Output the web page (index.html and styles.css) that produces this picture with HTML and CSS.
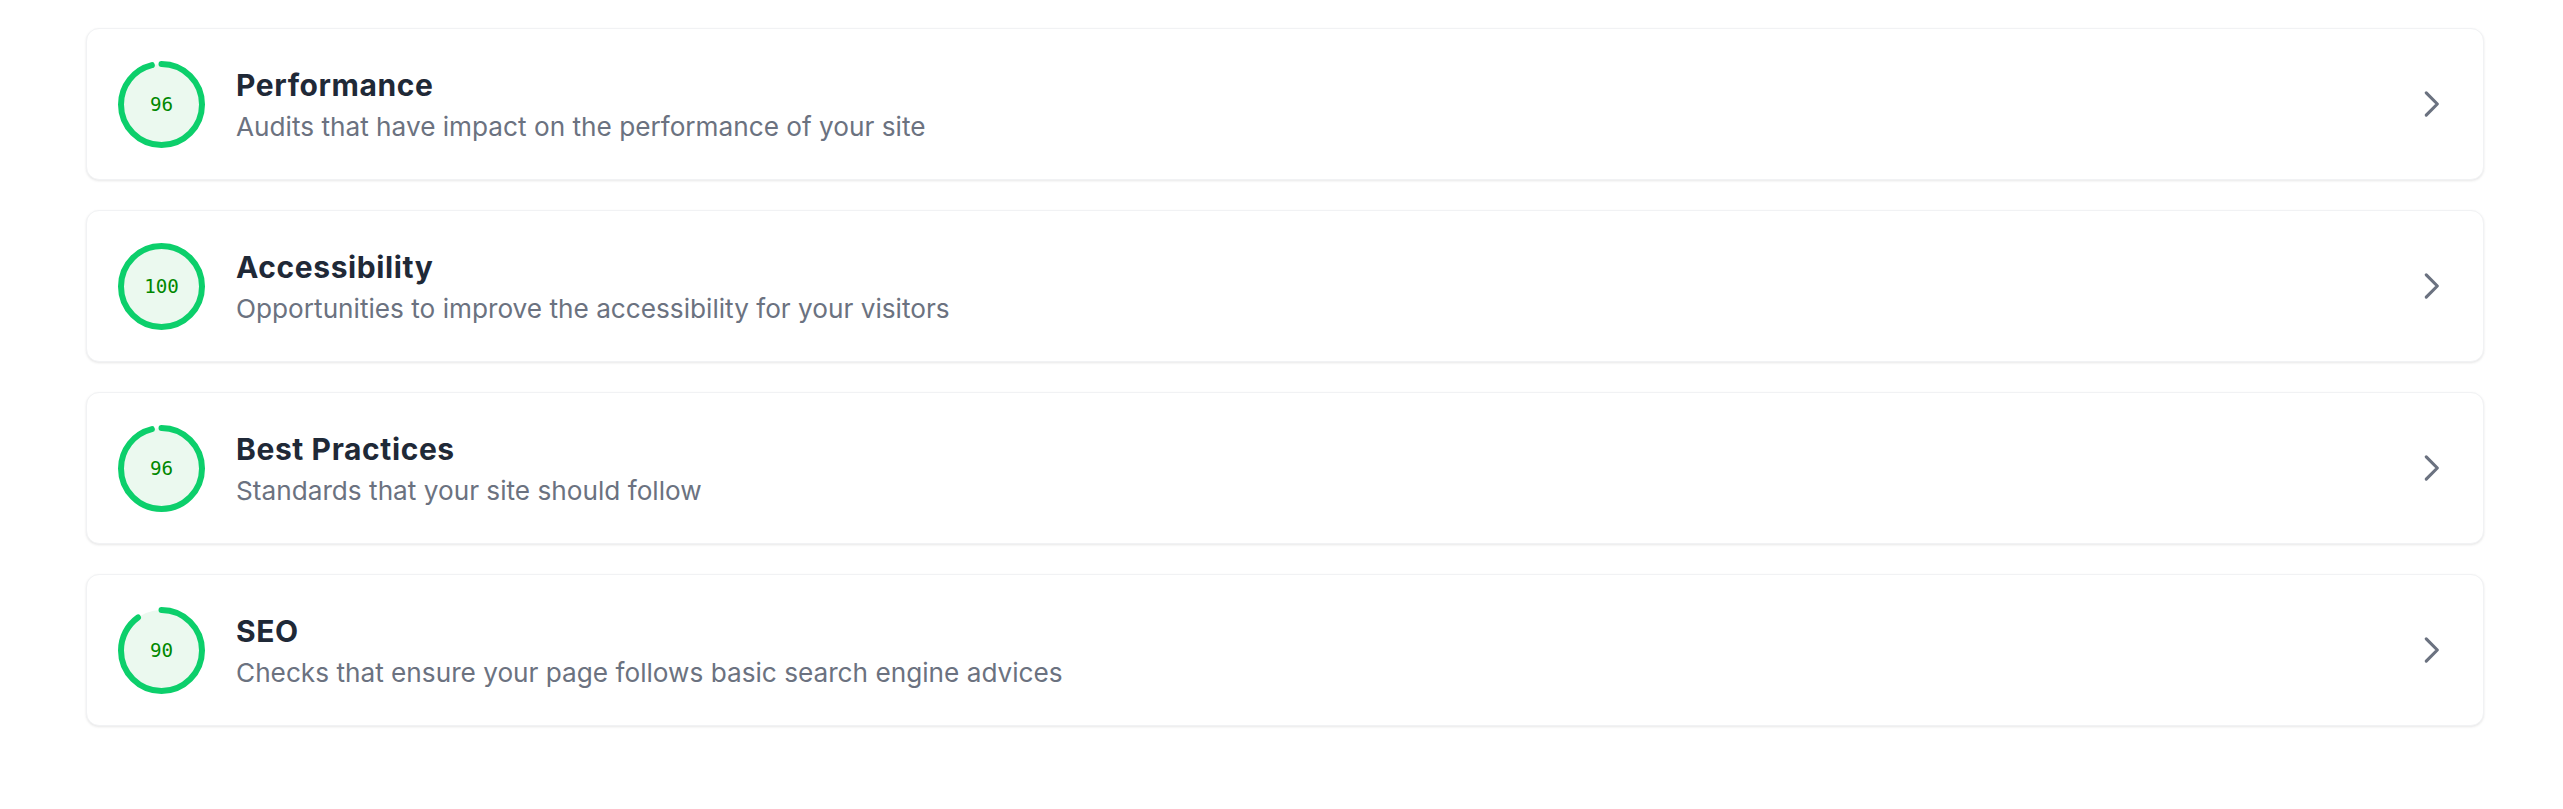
FILE: index.html
```html
<!DOCTYPE html>
<html lang="en">
<head>
<meta charset="utf-8">
<title>Audit categories</title>
<link rel="stylesheet" href="styles.css">
</head>
<body>
<main class="list">
  <a class="card" href="#">
    <svg class="gauge" width="87" height="87" viewBox="0 0 87 87">
      <circle class="gauge-bg" cx="43.5" cy="43.5" r="40.5"></circle>
      <circle class="gauge-arc" cx="43.5" cy="43.5" r="40.5" style="stroke-dasharray: 244.3 300"></circle>
      <text class="gauge-num" x="43.5" y="44">96</text>
    </svg>
    <div class="text">
      <div class="title">Performance</div>
      <div class="desc">Audits that have impact on the performance of your site</div>
    </div>
    <svg class="chev" width="38" height="38" viewBox="0 0 24 24"><path d="M9 5l7 7-7 7"></path></svg>
  </a>
  <a class="card" href="#">
    <svg class="gauge" width="87" height="87" viewBox="0 0 87 87">
      <circle class="gauge-bg" cx="43.5" cy="43.5" r="40.5"></circle>
      <circle class="gauge-arc" cx="43.5" cy="43.5" r="40.5" style="stroke-dasharray: 300 300"></circle>
      <text class="gauge-num" x="43.5" y="44">100</text>
    </svg>
    <div class="text">
      <div class="title">Accessibility</div>
      <div class="desc">Opportunities to improve the accessibility for your visitors</div>
    </div>
    <svg class="chev" width="38" height="38" viewBox="0 0 24 24"><path d="M9 5l7 7-7 7"></path></svg>
  </a>
  <a class="card" href="#">
    <svg class="gauge" width="87" height="87" viewBox="0 0 87 87">
      <circle class="gauge-bg" cx="43.5" cy="43.5" r="40.5"></circle>
      <circle class="gauge-arc" cx="43.5" cy="43.5" r="40.5" style="stroke-dasharray: 244.3 300"></circle>
      <text class="gauge-num" x="43.5" y="44">96</text>
    </svg>
    <div class="text">
      <div class="title">Best Practices</div>
      <div class="desc">Standards that your site should follow</div>
    </div>
    <svg class="chev" width="38" height="38" viewBox="0 0 24 24"><path d="M9 5l7 7-7 7"></path></svg>
  </a>
  <a class="card" href="#">
    <svg class="gauge" width="87" height="87" viewBox="0 0 87 87">
      <circle class="gauge-bg" cx="43.5" cy="43.5" r="40.5"></circle>
      <circle class="gauge-arc" cx="43.5" cy="43.5" r="40.5" style="stroke-dasharray: 229 300"></circle>
      <text class="gauge-num" x="43.5" y="44">90</text>
    </svg>
    <div class="text">
      <div class="title">SEO</div>
      <div class="desc">Checks that ensure your page follows basic search engine advices</div>
    </div>
    <svg class="chev" width="38" height="38" viewBox="0 0 24 24"><path d="M9 5l7 7-7 7"></path></svg>
  </a>
</main>
</body>
</html>
```

FILE: styles.css
```css
html, body {
  margin: 0;
  background: #ffffff;
}

body {
  font-family: "Inter", "Noto Sans", sans-serif;
}

.list {
  display: flex;
  flex-direction: column;
  gap: 30px;
  padding: 28px 79px 40px 86px;
}

.card {
  display: flex;
  align-items: center;
  gap: 31px;
  height: 152px;
  box-sizing: border-box;
  padding: 0 33px 0 31px;
  background: #ffffff;
  border: 1px solid #f1f2f4;
  border-radius: 13px;
  box-shadow: 0 1px 3px rgba(0, 0, 0, 0.07), 0 1px 2px rgba(0, 0, 0, 0.03);
  text-decoration: none;
}

.gauge {
  flex: none;
  display: block;
}

.gauge-bg {
  fill: #ebf9ef;
  stroke: none;
}

.gauge-arc {
  fill: none;
  stroke: #0ccf6b;
  stroke-width: 6;
  stroke-linecap: round;
  transform: rotate(-90deg);
  transform-origin: 43.5px 43.5px;
}

.gauge-num {
  font-family: "DejaVu Sans Mono", "Liberation Mono", monospace;
  font-size: 19.2px;
  fill: #008800;
  text-anchor: middle;
  dominant-baseline: middle;
}

.text {
  flex: 1;
  display: flex;
  flex-direction: column;
  gap: 6px;
  padding-top: 4px;
}

.title {
  font-family: "Inter", sans-serif;
  font-weight: 700;
  font-size: 30px;
  line-height: 36px;
  color: #1f2937;
  letter-spacing: 0.6px;
}

.desc {
  font-family: "Inter", sans-serif;
  font-size: 26.2px;
  line-height: 36px;
  color: #6b7280;
}

.chev {
  flex: none;
  display: block;
  fill: none;
  stroke: #6b7280;
  stroke-width: 2;
  stroke-linecap: round;
  stroke-linejoin: round;
}
```
